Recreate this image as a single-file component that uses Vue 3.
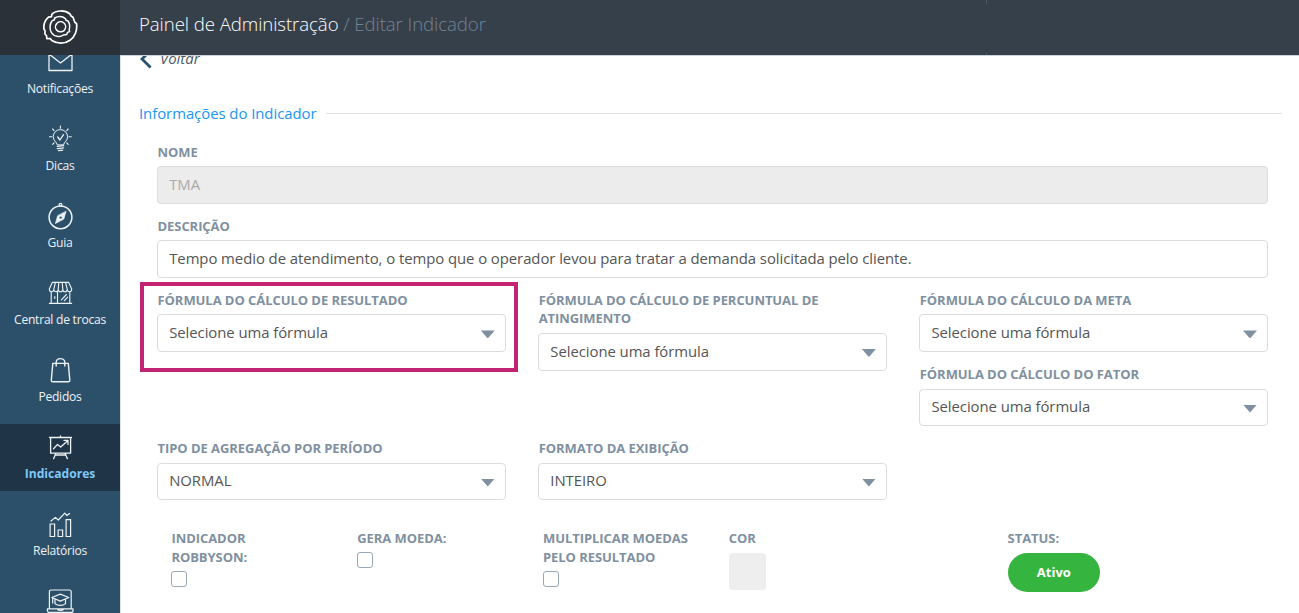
<script setup>
const menu = [
  { id: 'mail', label: 'Notificações' },
  { id: 'tips', label: 'Dicas' },
  { id: 'guide', label: 'Guia' },
  { id: 'store', label: 'Central de trocas' },
  { id: 'orders', label: 'Pedidos' },
  { id: 'indicators', label: 'Indicadores', active: true },
  { id: 'reports', label: 'Relatórios' },
  { id: 'training' },
]
const placeholder = 'Selecione uma fórmula'
</script>

<template>
  <div class="app">
    <aside class="sidebar">
      <div class="logo">
        <svg width="36" height="36" viewBox="0 0 36 36" fill="none" stroke="#fff" stroke-linejoin="round">
          <path stroke-width="1.7" d="M6.5 8.2 9.5 7.6 9.8 5.4C14 1 23 .8 28 5l1 2 2 1.2 1.8 5 1.7 1.3C35.5 21 33 28 28 31.2 23 35 15 35 9.8 31.5l-1.5-2-3.5.2L4.6 27 2.9 24.8 3 21.8 2 20C1.3 15.5 2.8 11.5 6.5 8.2Z" />
          <path stroke-width="1.5" d="M12.6 9C16.5 7 20.5 7.2 23.4 9.6l.6 1.6 2 .8c2 3 2 6 1.2 8.6l.4 2-2 .8-1 2.2-3.2.4C18 28.6 12 27.5 9.6 23.8 7.2 20 7.6 14.6 10.4 11.6l2-.8Z" />
          <path stroke-width="1.5" d="M15.6 13.6C18 12 21 12.6 22.6 14.6c1.6 2.2 1.2 5.2-.6 7-2 1.8-5.2 1.6-7-.2-2-2-2-5-.2-6.8Z" />
        </svg>
      </div>
      <nav class="menu">
        <a v-for="item in menu" :key="item.id" class="item" :class="{ active: item.active }">
          <svg class="icon" width="28" height="28" viewBox="0 0 28 28" fill="none" stroke="#edf2f5" stroke-width="1.3" stroke-linejoin="round" stroke-linecap="round">
            <template v-if="item.id === 'mail'">
              <path d="M3 5h23v17.5H3zM3 6l11.5 9L26 6" />
            </template>
            <template v-else-if="item.id === 'tips'">
              <path stroke-width="1" d="M11.2 19.5c-.2-2.4-4-3.6-4-7.7a7.2 7.2 0 0 1 14.4 0c0 4.1-3.8 5.3-4 7.7Z" />
              <path stroke-width="1.3" d="m11.7 12 2.2 3 3.6-5.3" />
              <path stroke-width="1.3" d="m11.3 21.4 6.3-.8m-6.3 3 6.3-.8m-5 2.9 4-.5" />
              <path stroke-width="1.1" d="M14.4 1v2.2M3.5 11.7h2.3M23 11.7h2.3M6.6 4l1.5 1.6M22.2 4l-1.5 1.6M6.6 19.4l1.5-1.5M22.2 19.4l-1.5-1.5" />
            </template>
            <template v-else-if="item.id === 'guide'">
              <circle cx="14.5" cy="15.3" r="11.4" stroke-width="1.5" />
              <circle cx="14.5" cy="2.7" r="1.4" stroke-width="1.2" />
              <path fill="#edf2f5" fill-rule="evenodd" stroke-width=".7" d="m20 9.5-2.2 7.6-8.4 4.4 2.2-7.6ZM14.7 13.9a1.5 1.5 0 1 0 0 3 1.5 1.5 0 0 0 0-3Z" />
            </template>
            <template v-else-if="item.id === 'store'">
              <path stroke-width="1.1" d="M6.3 3.4h16.4l3 6.5c0 3.7-4.5 3.7-4.5.3 0 3.4-4.4 3.4-4.4 0 0 3.4-4.6 3.4-4.6 0 0 3.4-4.4 3.4-4.4 0 0 3.4-4.5 3.4-4.5-.3ZM9.4 3.5l-1.6 6.6M12.8 3.5l-.6 6.6M16.2 3.5l.6 6.6M19.6 3.5l1.6 6.6" />
              <path stroke-width="1.1" d="M5.2 13v11M11.5 13v11M23.8 13v11M3.4 24.4h22.2M8.8 17.5v2M15.4 20.8l5-5.3M18.3 21.6l3.3-3.5" />
            </template>
            <template v-else-if="item.id === 'orders'">
              <path stroke-width="1.4" d="M6.8 7.4h15.5l1.5 16.8c0 1-.5 1.6-1.5 1.6H6.8c-1 0-1.5-.6-1.5-1.6ZM10.2 10V6.4c0-5.1 8.6-5.1 8.6 0V10" />
            </template>
            <template v-else-if="item.id === 'indicators'">
              <path stroke-width="1.3" d="M3.5 4.5h22M4.6 4.8v15.4h20V4.8M14.5 3v1.2M9.8 20.4l-2.2 5.3M19.2 20.4l2.2 5.3M9 22h11M7.5 15.8l4-4.4 3.2 2.6 7.3-6.4M18 7.4h4v4" />
            </template>
            <template v-else-if="item.id === 'reports'">
              <path stroke-linejoin="miter" stroke-width="1.2" d="M4.1 14h4.5v12.5H4.1zM12.1 20h4.5v6.5h-4.5zM20.1 9.6h4.5v16.9h-4.5z" />
              <path stroke-width="1.2" d="m5 11 4.4-3.6 2.9 2.6 6.5-6.8 2.1 2.3 2.7-2" />
            </template>
            <template v-else>
              <path stroke-width="1.2" d="M3.4 21.6V5c0-1.4.4-2 1.6-2h18.5c1.3 0 1.7.6 1.7 2v16.6M1.4 21.8H27v1.6c0 1.4-.8 2-1.8 2h-22c-1.1 0-1.8-.6-1.8-2ZM11.5 22c0 1.7 6 1.7 6 0" />
              <path stroke-width="1.2" d="m5.8 10.5 8.5-3.4 8.5 3.4-8.5 3.6ZM9 12v4.6c2.5 2.4 8 2.4 10.5 0V12M6.7 11v5" />
            </template>
          </svg>
          <span v-if="item.label" class="item-label">{{ item.label }}</span>
        </a>
      </nav>
    </aside>

    <div class="page">
      <header class="topbar">
        <h1 class="crumbs">Painel de Administração <span>/ Editar Indicador</span></h1>
      </header>

      <main class="content">
        <a class="back">
          <svg width="12" height="20" viewBox="0 0 12 20" fill="none" stroke="#2b516d" stroke-width="2.8"><path d="M10.6 1.5 2 10l8.6 8.5" /></svg>
          <em>Voltar</em>
        </a>

        <div class="section-title"><h2>Informações do Indicador</h2></div>

        <form class="form">
          <div class="field">
            <label>NOME</label>
            <div class="control disabled">TMA</div>
          </div>
          <div class="field">
            <label>DESCRIÇÃO</label>
            <div class="control">Tempo medio de atendimento, o tempo que o operador levou para tratar a demanda solicitada pelo cliente.</div>
          </div>

          <div class="columns formulas">
            <div class="field highlighted">
              <label>FÓRMULA DO CÁLCULO DE RESULTADO</label>
              <div class="control select">{{ placeholder }}</div>
            </div>
            <div class="field">
              <label>FÓRMULA DO CÁLCULO DE PERCUNTUAL DE ATINGIMENTO</label>
              <div class="control select">{{ placeholder }}</div>
            </div>
            <div>
              <div class="field">
                <label>FÓRMULA DO CÁLCULO DA META</label>
                <div class="control select">{{ placeholder }}</div>
              </div>
              <div class="field">
                <label>FÓRMULA DO CÁLCULO DO FATOR</label>
                <div class="control select">{{ placeholder }}</div>
              </div>
            </div>
          </div>

          <div class="columns">
            <div class="field">
              <label>TIPO DE AGREGAÇÃO POR PERÍODO</label>
              <div class="control select">NORMAL</div>
            </div>
            <div class="field">
              <label>FORMATO DA EXIBIÇÃO</label>
              <div class="control select">INTEIRO</div>
            </div>
          </div>

          <div class="options">
            <div class="option"><label>INDICADOR<br>ROBBYSON:</label><span class="check"></span></div>
            <div class="option"><label>GERA MOEDA:</label><span class="check"></span></div>
            <div class="option"><label>MULTIPLICAR MOEDAS<br>PELO RESULTADO</label><span class="check"></span></div>
            <div class="option"><label>COR</label><span class="swatch"></span></div>
            <div class="option status"><label>STATUS:</label><button type="button">Ativo</button></div>
          </div>
        </form>
      </main>
    </div>
  </div>
</template>

<style>
body { margin: 0; overflow: hidden; }
</style>

<style scoped>
.app {
  display: flex;
  height: 613px;
  overflow: hidden;
  background: #fff;
  font-family: "Open Sans", "Noto Sans", sans-serif;
}
.sidebar {
  width: 120px;
  flex: none;
  display: flex;
  flex-direction: column;
  background: #2d506a;
}
.logo {
  height: 55px;
  flex: none;
  display: flex;
  align-items: center;
  justify-content: center;
  padding-bottom: 2px;
  box-sizing: border-box;
  background: #2a3138;
}
.menu {
  flex: 1;
  min-height: 0;
  overflow: hidden;
  display: flex;
  flex-direction: column;
  gap: 10px;
}
.item:first-child { margin-top: -16px; }
.item {
  height: 67px;
  flex: none;
  display: flex;
  flex-direction: column;
  align-items: center;
  color: #edf2f5;
}
.item.active { background: #1f3447; color: #7dc8fa; font-weight: 700; }
.icon { margin-top: 9px; }
.item-label { margin-top: 4px; font-size: 12.1px; line-height: 18px; letter-spacing: -.25px; white-space: nowrap; }
.active .item-label { letter-spacing: 0; }
.page { flex: 1; min-width: 0; display: flex; flex-direction: column; }
.topbar {
  height: 55px;
  flex: none;
  display: flex;
  align-items: center;
  padding: 0 19px 8px;
  box-sizing: border-box;
  background:
    linear-gradient(#48586a, #48586a) 866px 0 / 1px 4px no-repeat,
    linear-gradient(#48586a, #48586a) 866px 100% / 1px 2px no-repeat,
    #36404b;
}
.crumbs { margin: 0; font-size: 18.6px; line-height: 26px; font-weight: 300; letter-spacing: -.06px; color: #fff; }
.crumbs span { color: #748396; }
.content {
  flex: 1;
  min-height: 0;
  overflow: hidden;
  padding: 0 17px 0 18px;
  border-left: 1px solid #dde4ea;
  border-top: 1px solid #ccd2d8;
}
.back {
  display: flex;
  align-items: center;
  gap: 8px;
  height: 20px;
  margin: -7px 0 0 1px;
  color: #4c5966;
  font-size: 14.9px;
}
.back em { margin-top: -2px; }
.section-title {
  display: flex;
  align-items: center;
  gap: 9px;
  height: 24px;
  margin-top: 32px;
}
.section-title::after { content: ""; flex: 1; height: 1px; background: #e1e1e1; }
h2 { margin: 0; font-size: 14.9px; font-weight: 400; line-height: 20px; letter-spacing: -.04px; color: #2196f3; }
.form { margin: 17.7px 14px 0 18px; }
.field { padding-bottom: 13px; }
label {
  display: block;
  padding-left: .5px;
  font-size: 13px;
  line-height: 18.6px;
  font-weight: 700;
  letter-spacing: -.06px;
  color: #8090a0;
}
.control {
  box-sizing: border-box;
  height: 37.5px;
  margin-top: 5px;
  padding: 0 11.2px;
  border: 1px solid #dcdcdc;
  border-radius: 4px;
  font-size: 14.9px;
  line-height: 35px;
  letter-spacing: -.06px;
  color: #555;
  background: #fff;
  white-space: nowrap;
}
.disabled { background: #ececec; color: #aaa; }
.select { display: flex; align-items: center; justify-content: space-between; padding-right: 10px; line-height: 33px; padding-bottom: 1.6px; }
.select::after {
  content: "";
  width: 14px;
  height: 8px;
  margin-top: 4px;
  background: #8090a0;
  clip-path: polygon(0 0, 100% 0, 50% 100%);
}
.columns { display: grid; grid-template-columns: repeat(3, minmax(0, 1fr)); column-gap: 32.4px; }
.formulas { align-items: start; }
.highlighted { position: relative; }
.highlighted::after {
  content: "";
  position: absolute;
  left: -17px;
  top: -9px;
  width: 370px;
  height: 82px;
  border: 4px solid #c22373;
}
.options { display: flex; margin: 15.8px 0 0 14.4px; }
.option { width: 185.8px; flex: none; }
.option label { padding-left: 0; }
.status { margin-left: 93px; }
.check {
  display: block;
  box-sizing: border-box;
  width: 16px;
  height: 16px;
  margin-top: 4.4px;
  border: 1px solid #99a8b6;
  border-radius: 3px;
}
.swatch { display: block; width: 37px; height: 37px; margin-top: 5px; border-radius: 4px; background: #eee; }
button {
  display: block;
  width: 92.5px;
  height: 39px;
  margin: 5px 0 0;
  padding: 0;
  border: 0;
  border-radius: 20px;
  background: #36b440;
  color: #fff;
  font: 700 13px "Open Sans", sans-serif;
}
</style>
